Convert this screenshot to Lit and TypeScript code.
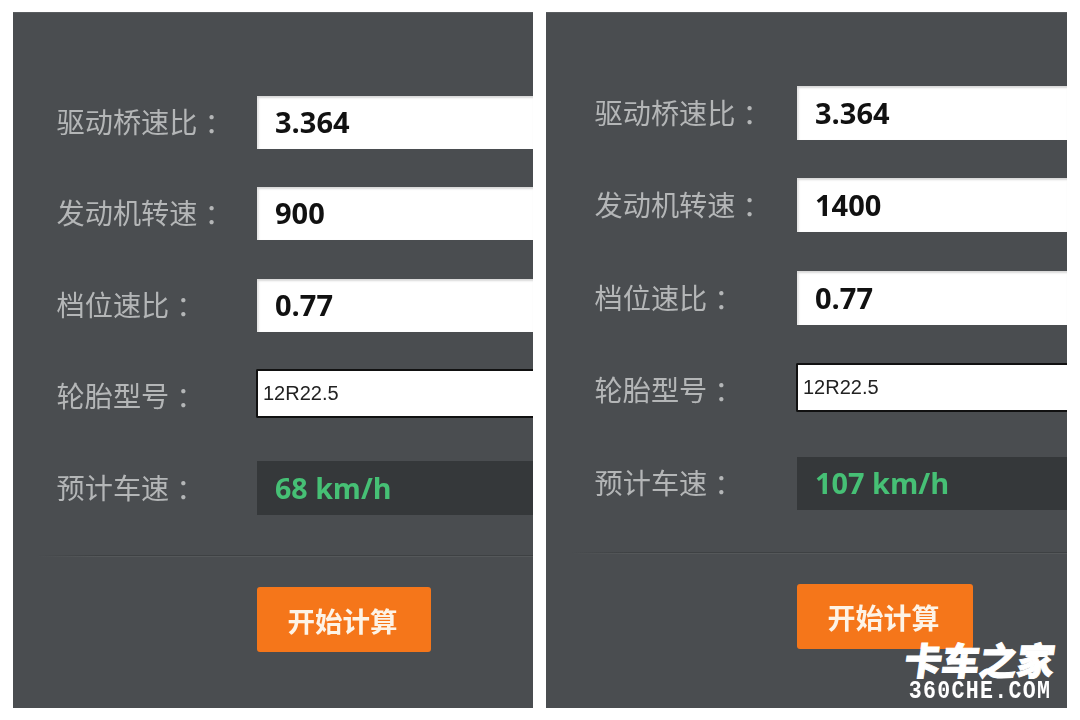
import { LitElement, html, css } from "lit";
import { customElement } from "lit/decorators.js";

const PANELS = [
  { cls: "left", rows: ["3.364", "900", "0.77", "12R22.5", "68 km/h"] },
  { cls: "right", rows: ["3.364", "1400", "0.77", "12R22.5", "107 km/h"] },
];
const LABELS = ["驱动桥速比", "发动机转速", "档位速比", "轮胎型号", "预计车速"];

@customElement("app-root")
export class AppRoot extends LitElement {
  static styles = css`
    :host {
      display: block;
      width: 1080px;
      height: 720px;
      background: #fff;
      overflow: hidden;
    }
    .page {
      position: relative;
      display: flex;
      gap: 13px;
      padding: 12px 0 0 13px;
      box-sizing: border-box;
      height: 720px;
    }
    .panel {
      height: 696px;
      box-sizing: border-box;
      background: #4a4d50;
      overflow: hidden;
      display: flex;
      flex-direction: column;
      box-shadow: inset 0 1px 0 #5a5d60;
    }
    .left { width: 520px; padding-top: 84px; --label: 44px; --col: 200px; }
    .right { width: 521px; padding-top: 74px; --label: 49px; --col: 202px; }
    .row {
      display: flex;
      align-items: center;
      height: 53px;
      flex: none;
    }
    .label {
      box-sizing: border-box;
      width: calc(var(--label) + var(--col));
      padding-left: calc(var(--label) - 0.5px);
      padding-bottom: 3px;
      flex: none;
      font: 400 28.2px/40px "Noto Sans CJK SC", sans-serif;
      color: #b4b6b7;
      white-space: nowrap;
      filter: blur(0.5px);
    }
    .colon {
      display: inline-block;
      font-family: "Noto Sans CJK TC", sans-serif;
      transform: translateY(2px);
    }
    .box {
      flex: 1;
      min-width: 0;
      height: 100%;
      box-sizing: border-box;
      display: flex;
      align-items: center;
      padding-left: 18px;
      background: #fff;
      color: #111;
      font: 700 29px "Open Sans", sans-serif;
      box-shadow: inset 0 3px 2px -1px #d9d9d9, inset 3px 0 2px -1px #e6e6e6;
    }
    .box span { filter: blur(0.4px); padding-bottom: 2px; }
    .row.r2 { margin-top: 38px; }
    .row.r3 { margin-top: 39px; }
    .row.r4 { margin-top: 37px; height: 49px; }
    .row.r5 { margin-top: 43px; height: 54px; }
    .right .row.r1, .right .row.r2, .right .row.r3 { height: 54px; }
    .right .row.r4 { margin-top: 38px; }
    .right .row.r5 { margin-top: 45px; height: 53px; }
    .r4 .label { padding-top: 3px; padding-bottom: 0; }
    .r4 .box {
      margin-left: -1px;
      background: #fff;
      border: 2px solid #111;
      border-right: 0;
      border-radius: 2px 0 0 2px;
      padding-left: 5px;
      box-shadow: none;
      font: 400 20px "Liberation Sans", sans-serif;
      color: #222;
    }
    .r4 .box span { padding-bottom: 0; }
    .r5 .box {
      background: #35383a;
      color: #46c075;
      font-weight: 700;
      font-size: 28.6px;
      box-shadow: none;
    }
    .right .r5 .box { font-size: 28.9px; }
    .rule {
      flex: none;
      height: 2px;
      margin-top: 40px;
      margin-left: 24px;
      background:
        linear-gradient(to right, #4a4d50, transparent 60px),
        linear-gradient(to bottom, #3e4143 50%, #55585a 50%);
    }
    .right .rule { margin-top: 42px; }
    .actions {
      flex: none;
      padding-left: calc(var(--label) + var(--col));
      margin-top: 30px;
    }
    .go {
      display: flex;
      align-items: center;
      justify-content: center;
      width: 174px;
      height: 65px;
      border: 0;
      padding: 0 3px 0 0;
      box-sizing: border-box;
      border-radius: 3px;
      background: #f5761a;
      color: #fdf3e6;
      font: 700 27.5px "Noto Sans CJK SC", sans-serif;
    }
    .go span { filter: blur(0.4px); }
    .right .go { width: 176px; font-size: 28px; }
    .mark {
      position: absolute;
      left: 904px;
      top: 638px;
      width: 152px;
      color: #fff;
      text-align: center;
    }
    .mark .cn {
      font: 900 37.5px/42px "Noto Sans CJK SC", sans-serif;
      -webkit-text-stroke: 1px #fff;
      white-space: nowrap;
      transform: skewX(-8deg);
    }
    .mark .en {
      margin-top: 1px;
      font: 700 21.6px/20px "Liberation Mono", monospace;
      letter-spacing: 1.3px;
      white-space: nowrap;
      transform: scaleY(1.2);
    }
  `;

  render() {
    return html`
      <div class="page">
        ${PANELS.map(
          (p) => html`
            <section class="panel ${p.cls}">
              ${p.rows.map(
                (v, i) => html`
                  <div class="row r${i + 1}">
                    <div class="label">${LABELS[i]}<span class="colon">：</span></div>
                    <div class="box"><span>${v}</span></div>
                  </div>
                `
              )}
              <div class="rule"></div>
              <div class="actions"><button class="go"><span>开始计算</span></button></div>
            </section>
          `
        )}
        <div class="mark">
          <div class="cn">卡车之家</div>
          <div class="en">360CHE.COM</div>
        </div>
      </div>
    `;
  }
}
